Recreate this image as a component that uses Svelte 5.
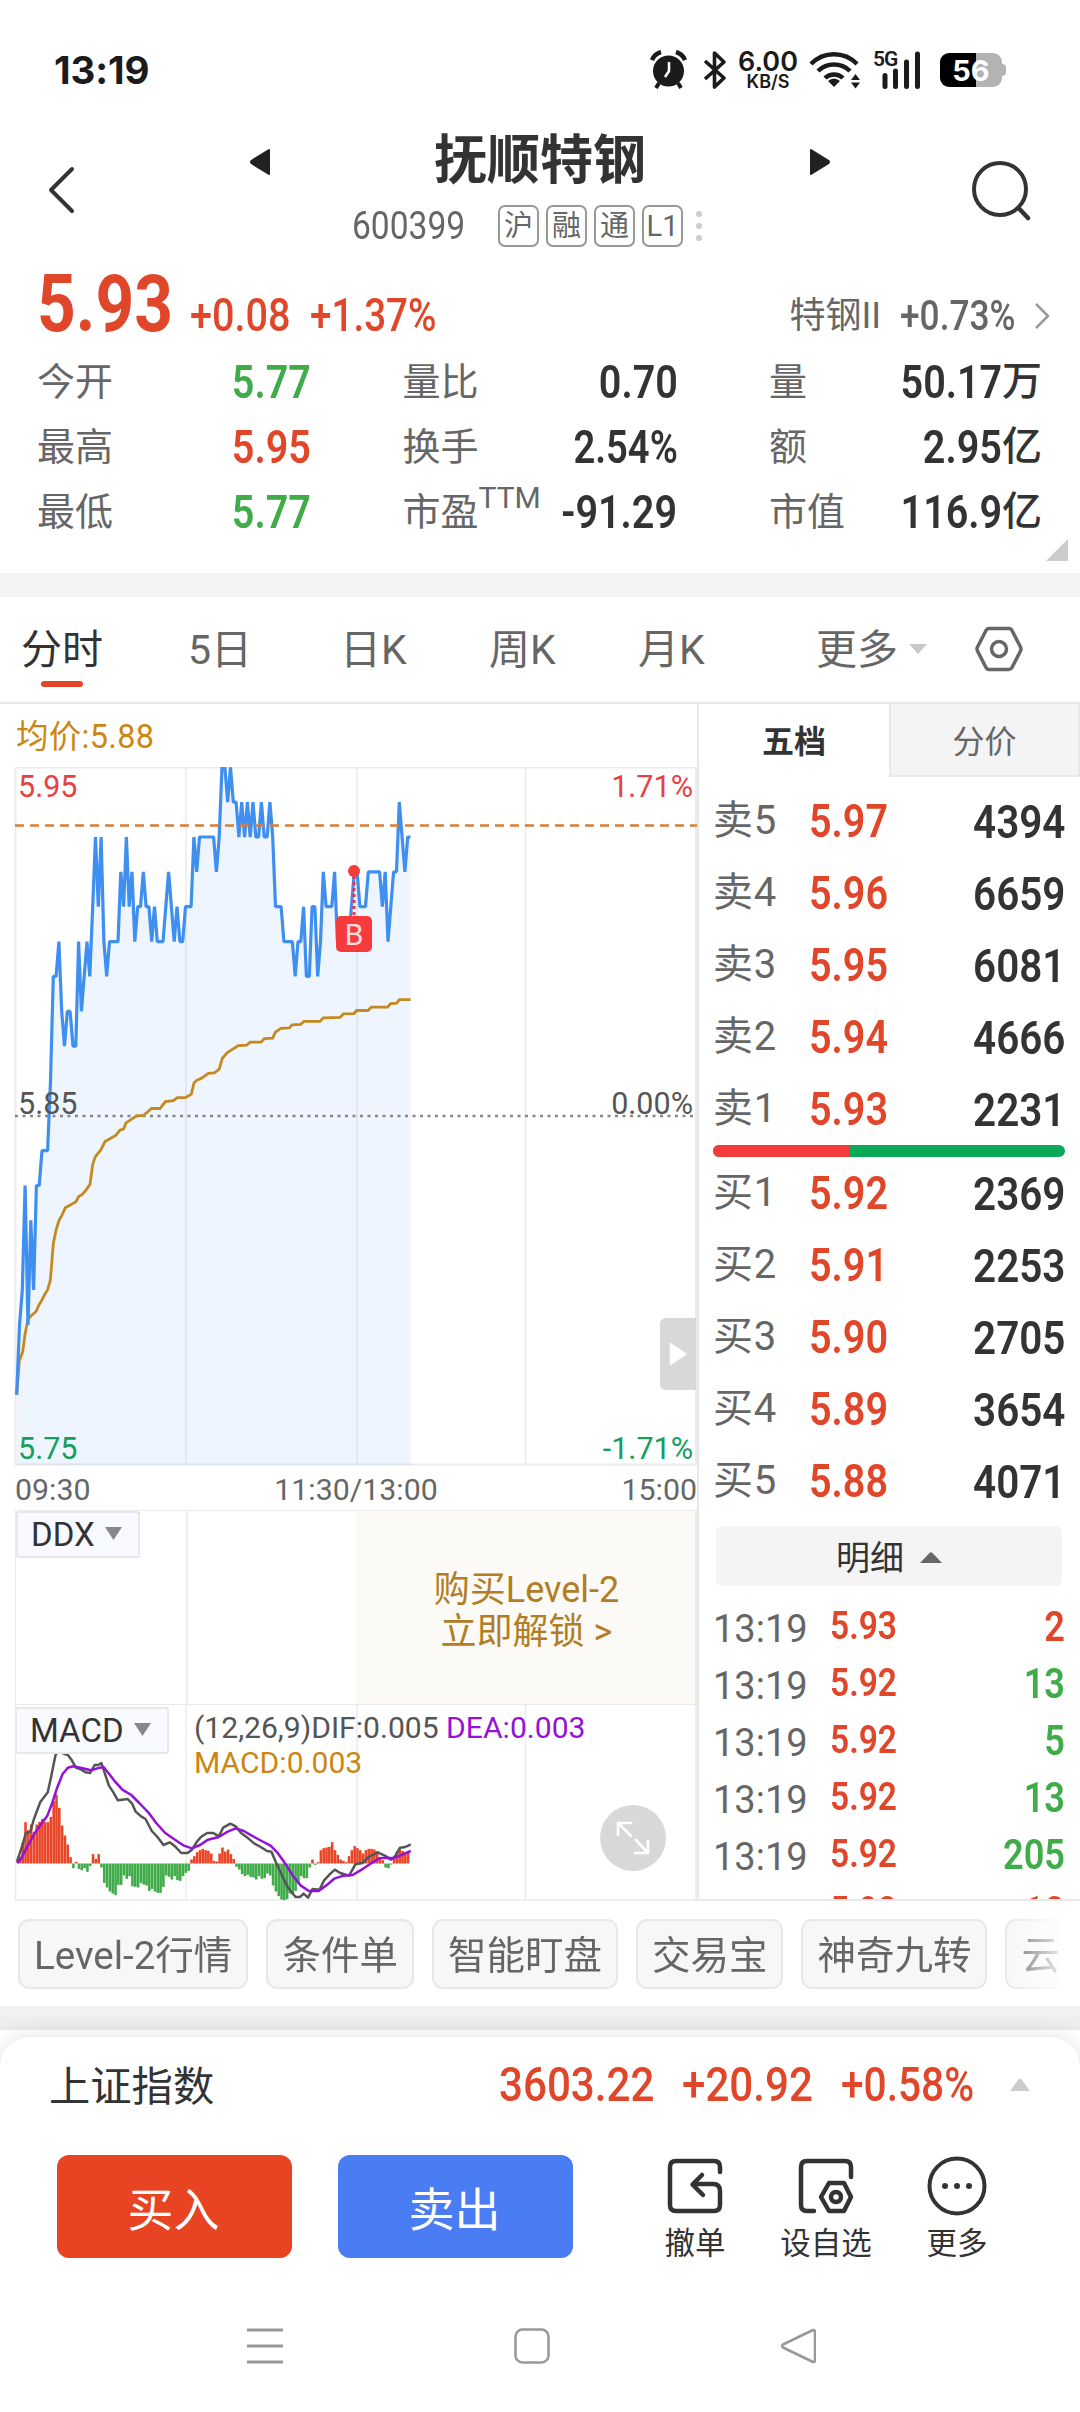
<script lang="ts">
  const tags = ['沪', '融', '通', 'L1']

  const stats = [
    { label: '今开', value: '5.77', tone: 'down' },
    { label: '量比', value: '0.70' },
    { label: '量', value: '50.17', unit: '万' },
    { label: '最高', value: '5.95', tone: 'up' },
    { label: '换手', value: '2.54%' },
    { label: '额', value: '2.95', unit: '亿' },
    { label: '最低', value: '5.77', tone: 'down' },
    { label: '市盈', sup: 'TTM', value: '-91.29' },
    { label: '市值', value: '116.9', unit: '亿' },
  ]

  const periods = ['分时', '5日', '日K', '周K', '月K']

  const asks = [
    ['卖5', '5.97', '4394'],
    ['卖4', '5.96', '6659'],
    ['卖3', '5.95', '6081'],
    ['卖2', '5.94', '4666'],
    ['卖1', '5.93', '2231'],
  ]
  const bids = [
    ['买1', '5.92', '2369'],
    ['买2', '5.91', '2253'],
    ['买3', '5.90', '2705'],
    ['买4', '5.89', '3654'],
    ['买5', '5.88', '4071'],
  ]
  const askShare = 38.7

  const ticks = [
    { price: '5.93', qty: '2', tone: 'up' },
    { price: '5.92', qty: '13', tone: 'down' },
    { price: '5.92', qty: '5', tone: 'down' },
    { price: '5.92', qty: '13', tone: 'down' },
    { price: '5.92', qty: '205', tone: 'down' },
    { price: '5.92', qty: '10', tone: 'up' },
  ]

  const chips = ['Level-2行情', '条件单', '智能盯盘', '交易宝', '神奇九转', '云参数']

  // one entry per minute, in cents away from the previous close (5.85)
  const minutes = [
    -8, -6, -5, -2, -6, -3, -5, -2, -2, -1, -1, -1, 1, 4, 4, 5, 3, 2, 3, 3, 2, 2, 5, 3, 4, 5, 4, 6, 8, 6,
    8, 5, 4, 5, 5, 5, 5, 7, 6, 8, 6, 7, 5, 6, 6, 7, 6, 6, 5, 6, 5, 5, 5, 6, 7, 6, 5, 6, 5, 5,
    6, 6, 6, 8, 7, 8, 8, 8, 8, 8, 8, 7, 8, 10, 10, 9, 10, 9, 9, 8, 9, 8, 9, 8, 9, 8, 8, 9, 8, 8,
    9, 8, 6, 6, 6, 5, 5, 5, 5, 4, 5, 5, 6, 4, 4, 6, 6, 4, 5, 7, 6, 6, 6, 7, 5, 5, 5, 5, 5, 6,
    7, 7, 6, 6, 6, 7, 7, 7, 7, 7, 6, 7, 5, 6, 7, 7, 9, 8, 7, 8, 8,
  ]

  const macdBars = [
    0, 20, 62, 124, 100, 117, 94, 117, 125, 134, 124, 124, 140, 187, 207, 167, 114, 84, 57, 19, -14, 5, -16, -20,
    -14, -25, -8, 28, 14, 28, -12, -58, -72, -84, -90, -95, -64, -64, -36, -46, -38, -68, -70, -72, -58, -63, -66,
    -82, -76, -84, -88, -88, -70, -36, -40, -48, -38, -50, -52, -38, -28, -22, 12, 22, 34, 40, 44, 40, 38, 30, 8,
    6, 30, 48, 36, 42, 28, 14, -10, -18, -32, -38, -34, -40, -42, -48, -38, -46, -44, -30, -36, -66, -84, -98,
    -108, -110, -107, -90, -92, -82, -60, -38, -44, -44, -12, 12, -4, 4, 40, 46, 48, 50, 64, 40, 26, 12, 8, 4, 22,
    40, 52, 46, 40, 30, 40, 44, 44, 42, 36, 16, 10, -12, -14, -3, 14, 36, 44, 38, 34, 32,
  ]

  const STEP = 2.813
  const minuteX = (i: number) => 16.7 + i * STEP
  const priceY = (c: number) => 348.8 - c * 34.85

  const priceLine = minutes.map((c, i) => `${minuteX(i).toFixed(1)},${priceY(c).toFixed(1)}`).join(' ')
  const lastX = minuteX(minutes.length - 1)
  const priceArea = `${minuteX(0)},698 ${priceLine} ${lastX},698`

  const avgLine =
    '50,1489 58,1410 68,1390 75,1350 84,1315 92,1308 108,1297 118,1280 125,1272 134,1258 143,1247 151,1225 160,1140 168,1110 177,1087 186,1075 196,1058 228,1044 236,1032 247,1027 260,1015 270,1004 278,958 286,940 303,924 315,905 347,891 360,879 371,876 378,862 410,846 430,845 455,829 480,829 496,813 520,811 532,804 556,804 574,796 582,770 590,764 605,759 625,748 643,747 658,738 667,713 682,700 715,684 740,683 750,676 783,676 793,668 818,667 826,653 843,644 868,643 876,636 902,635 912,628 960,628 970,620 1020,619 1030,611 1062,610 1070,603 1104,603 1114,595 1163,595 1172,587 1190,586 1198,578 1232,578'
  const difLine =
    '38,1148 50,1100 58,1062 68,1058 76,1020 90,970 107,940 115,890 124,830 132,812 142,824 152,828 160,842 170,866 182,872 192,880 202,882 212,858 220,858 227,852 234,880 244,920 254,940 264,964 274,962 286,960 296,974 304,998 316,1012 326,1020 340,1056 354,1076 366,1098 380,1090 392,1102 406,1122 420,1122 430,1112 440,1090 450,1074 464,1062 478,1062 490,1072 500,1046 516,1034 528,1042 540,1062 556,1078 570,1094 584,1104 598,1116 608,1118 618,1150 632,1190 646,1228 662,1254 672,1254 680,1244 690,1256 700,1230 716,1232 726,1204 740,1184 750,1172 762,1182 782,1190 796,1156 812,1152 826,1134 846,1120 862,1130 876,1142 886,1130 896,1106 908,1104 920,1096'
  const deaLine =
    '38,1152 46,1142 60,1106 76,1066 92,1036 106,1010 116,976 128,926 140,886 152,866 164,862 180,866 204,874 218,868 232,864 244,884 258,908 274,932 294,948 312,972 332,1000 350,1032 370,1062 392,1082 412,1100 430,1108 448,1098 466,1082 490,1074 510,1058 528,1048 546,1056 564,1070 586,1086 606,1100 622,1122 640,1156 658,1194 674,1220 692,1236 714,1236 732,1218 750,1198 770,1190 790,1188 810,1172 830,1154 850,1138 866,1136 880,1138 896,1130 920,1116'
</script>

<div class="screen">
  <div class="status">
    <span class="clock">13:19</span>
    <div class="status-icons">
      <svg width="37" height="40" viewBox="0 0 37 40">
        <circle cx="18.500" cy="21" r="15.500" fill="#1b1b1b" />
        <path d="M2 10A14 14 0 0 1 11 2M26 2A14 14 0 0 1 35 10" fill="none" stroke="#1b1b1b" stroke-width="4.500" />
        <path d="M9 33l-3 5M28 33l3 5" stroke="#1b1b1b" stroke-width="4" />
        <path d="M19 12v9l-4 6" fill="none" stroke="#fff" stroke-width="2.500" />
      </svg>
      <svg class="bt" width="24" height="40" viewBox="0 0 24 40">
        <path d="M2 11l19 17-9.500 9V3L21 12 2 29" fill="none" stroke="#1b1b1b" stroke-width="3.600" stroke-linejoin="round" />
      </svg>
      <div class="speed"><b>6.00</b><i>KB/S</i></div>
      <svg class="wifi" width="52" height="38" viewBox="0 0 52 38">
        <g fill="none" stroke="#1b1b1b" stroke-width="4.500">
          <path d="M2 13a32 32 0 0 1 46 0" />
          <path d="M9 20a23 23 0 0 1 32 0" />
          <path d="M16 27a13 13 0 0 1 18 0" />
        </g>
        <path d="M25 36l-6-6q6-5 12 0z" fill="#1b1b1b" />
        <path d="M42 29l4.500-6 4.500 6zM42 31.500l4.500 6 4.500-6z" fill="#1b1b1b" />
      </svg>
      <div class="signal">
        <b>5G</b>
        <svg width="40" height="38" viewBox="0 0 40 38">
          <path d="M3 24.500v11M13.500 20v15.500M24.500 11v24.500M35.500 3v32.500" stroke="#1b1b1b" stroke-width="5" stroke-linecap="round" />
        </svg>
      </div>
      <div class="battery"><span>56</span></div>
    </div>
  </div>

  <header>
    <svg class="back" width="32" height="50" viewBox="0 0 32 50">
      <path d="M27 4L6 25l21 21" fill="none" stroke="#333" stroke-width="4" stroke-linecap="round" stroke-linejoin="round" />
    </svg>
    <div class="heading">
      <div class="name-row">
        <svg width="22" height="28" viewBox="0 0 22 28"><path d="M20 2v24L3 15.500q-2-1.500 0-3z" fill="#222" stroke="#222" stroke-width="2" stroke-linejoin="round" /></svg>
        <h1>抚顺特钢</h1>
        <svg width="22" height="28" viewBox="0 0 22 28"><path d="M2 2v24l17-10.500q2-1.500 0-3z" fill="#222" stroke="#222" stroke-width="2" stroke-linejoin="round" /></svg>
      </div>
      <div class="code-row">
        <span class="code"><span class="din">600399</span></span>
        {#each tags as tag}
          <span class="tag">{tag}</span>
        {/each}
        <svg class="dots" width="6" height="32" viewBox="0 0 6 32" fill="#ccc"><circle cx="3" cy="4" r="3" /><circle cx="3" cy="16" r="3" /><circle cx="3" cy="28" r="3" /></svg>
      </div>
    </div>
    <svg class="search" width="60" height="60" viewBox="0 0 60 60">
      <circle cx="29" cy="28" r="26" fill="none" stroke="#333" stroke-width="4" />
      <path d="M47.500 47l9.500 10" stroke="#333" stroke-width="4.500" stroke-linecap="round" />
    </svg>
  </header>

  <section class="quote">
    <div class="last up">
      <span class="price"><span class="din">5.93</span></span>
      <span class="change"><span class="din">+0.08</span></span>
      <span class="change pct"><span class="din">+1.37%</span></span>
      <div class="sector">
        特钢II <span class="sector-pct"><span class="din">+0.73%</span></span>
        <svg width="18" height="30" viewBox="0 0 18 30"><path d="M3 3l12 12L3 27" fill="none" stroke="#999" stroke-width="2.500" /></svg>
      </div>
    </div>
    <div class="stats">
      {#each stats as s}
        <div class="stat">
          <span>{s.label}{#if s.sup}<sup>{s.sup}</sup>{/if}</span>
          <b class={s.tone}><span class="din end" class:tight={s.value.endsWith('%')}>{s.value}</span>{#if s.unit}<em>{s.unit}</em>{/if}</b>
        </div>
      {/each}
    </div>
    <svg class="corner" width="22" height="22" viewBox="0 0 22 22"><path d="M22 0v22H0z" fill="#ccc" /></svg>
  </section>

  <div class="band"></div>

  <nav class="periods">
    {#each periods as p, i}
      <span class:active={i === 0}>{p}</span>
    {/each}
    <span class="more">更多<svg width="18" height="10" viewBox="0 0 18 10"><path d="M0 0h18L9 10z" fill="#c8c8c8" /></svg></span>
    <svg class="gear" width="50" height="48" viewBox="0 0 50 48" fill="none" stroke="#666" stroke-width="3.500">
      <path d="M15 3.500h20q2 0 3 2l8.500 16.500q1 2 0 4L38 42.500q-1 2-3 2H15q-2 0-3-2L3.500 26q-1-2 0-4L12 5.500q1-2 3-2z" />
      <circle cx="25" cy="24" r="7.500" />
    </svg>
  </nav>

  <main>
    <div class="charts">
      <div class="avg">均价:5.88</div>
      <div class="pane">
        <svg width="697" height="699" viewBox="0 0 697 699">
          <g stroke="#ebebeb" stroke-width="1.500" fill="none">
            <path d="M15 .8h682M186 0v698M357 0v698M525.500 0v698" />
            <path d="M15.500 0v698M696 0v698M15 697.500h682" stroke-width="2" />
          </g>
          <polygon points={priceArea} fill="#3a8bee" fill-opacity=".085" />
          <path d="M15 349h682" stroke="#888" stroke-width="2.500" stroke-dasharray="3 4.500" />
          <polyline points={avgLine} transform="translate(0 -18) scale(.33333 .43367)" vector-effect="non-scaling-stroke" fill="none" stroke="#c48a20" stroke-width="2.800" />
          <polyline points={priceLine} fill="none" stroke="#3f8ff0" stroke-width="3.200" stroke-linejoin="bevel" />
          <path d="M15 58.500h682" stroke="#d67e36" stroke-width="2.600" stroke-dasharray="9 6" />
          <path d="M354 109v40" stroke="#e8354a" stroke-width="3" stroke-dasharray="3 3" />
          <circle cx="354" cy="104" r="6" fill="#f63b3d" />
          <rect x="336" y="149" width="36" height="36" rx="5" fill="#f63b3d" />
          <text x="354" y="178" text-anchor="middle" font-size="30" fill="#ffdcdc">B</text>
        </svg>
        <span class="axis tl red">5.95</span>
        <span class="axis tr red">1.71%</span>
        <span class="axis ml">5.85</span>
        <span class="axis mr">0.00%</span>
        <span class="axis bl green">5.75</span>
        <span class="axis br green">-1.71%</span>
        <div class="handle"><svg width="18" height="24" viewBox="0 0 18 24"><path d="M1.500 1.500v21L17 12z" fill="#fff" stroke="#fff" stroke-width="1.500" stroke-linejoin="round" /></svg></div>
      </div>
      <div class="times"><span>09:30</span><span>11:30/13:00</span><span>15:00</span></div>
      <div class="pane ddx">
        <div class="selector">DDX <svg width="17" height="13" viewBox="0 0 17 13"><path d="M0 0h17L8.500 13z" fill="#888" /></svg></div>
        <div class="unlock">购买Level-2<br />立即解锁 &gt;</div>
      </div>
      <div class="pane macd">
        <svg width="697" height="196" viewBox="0 0 697 196">
          <g stroke="#ebebeb" stroke-width="1.500"><path d="M15.500 0v196M186 0v196M357 0v196M525.500 0v196M696 0v196M15 195h682" /></g>
          {#each macdBars as v, i}
            <rect x={15.800 + i * STEP} y={v > 0 ? 158.500 - v / 3 : 158.500} width="2.600" height={Math.abs(v) / 3} fill={v > 0 ? '#e84527' : '#3fac49'} />
          {/each}
          <g transform="translate(0 -226) scale(.44643 .33333)" fill="none" stroke-width="2.500" stroke-linejoin="round">
            <polyline points={difLine} vector-effect="non-scaling-stroke" stroke="#555" />
            <polyline points={deaLine} vector-effect="non-scaling-stroke" stroke="#9412d8" />
          </g>
        </svg>
        <div class="selector">MACD <svg width="17" height="13" viewBox="0 0 17 13"><path d="M0 0h17L8.500 13z" fill="#888" /></svg></div>
        <div class="legend">(12,26,9)DIF:0.005 <span class="dea">DEA:0.003</span><br /><span class="val">MACD:0.003</span></div>
        <div class="expand">
          <svg width="34" height="34" viewBox="0 0 34 34" fill="none" stroke="#fff" stroke-width="2.600" stroke-linecap="round">
            <path d="M2 14V2h13M2 2l13 13M32 20v12H19M32 32L20 19" />
          </svg>
        </div>
      </div>
    </div>

    <aside>
      <div class="book-tabs"><b>五档</b><span>分价</span></div>
      <div class="book">
        {#each asks as [label, price, qty]}
          <div class="level"><span>{label}</span><b class="up"><span class="din">{price}</span></b><b class="qty"><span class="din end">{qty}</span></b></div>
        {/each}
        <div class="ratio"><i style="width: {askShare}%"></i></div>
        {#each bids as [label, price, qty]}
          <div class="level"><span>{label}</span><b class="up"><span class="din">{price}</span></b><b class="qty"><span class="din end">{qty}</span></b></div>
        {/each}
      </div>
      <div class="detail">明细 <svg width="22" height="11" viewBox="0 0 22 11"><path d="M0 11h22L12.500 1q-1.500-1.500-3 0z" fill="#666" /></svg></div>
      <div class="ticks">
        {#each ticks as t}
          <div class="tick"><span>13:19</span><b class="up"><span class="din">{t.price}</span></b><b class="qty {t.tone}"><span class="din end">{t.qty}</span></b></div>
        {/each}
      </div>
    </aside>
  </main>

  <div class="chips">
    {#each chips as chip}
      <span>{chip}</span>
    {/each}
  </div>

  <div class="band lower"></div>

  <footer>
    <div class="index">
      <span>上证指数</span>
      <div class="index-values up">
        <span class="din">3603.22</span>
        <span class="din">+20.92</span>
        <span class="din tight">+0.58%</span>
      </div>
      <svg width="22" height="13" viewBox="0 0 22 13"><path d="M1 13h20L12.500 1.500q-1.500-2-3 0z" fill="#ccc" /></svg>
    </div>
    <div class="actions">
      <button class="buy">买入</button>
      <button class="sell">卖出</button>
      <div class="action">
        <svg width="60" height="60" viewBox="0 0 60 60" fill="none" stroke="#333" stroke-width="4.500" stroke-linecap="round" stroke-linejoin="round">
          <path d="M55 16v-5q0-6-6-6H11q-6 0-6 6v38q0 6 6 6h38q6 0 6-6V35q0-7-7-7H29M37 19l-9.500 9.500L38 39" />
        </svg>
        撤单
      </div>
      <div class="action wide">
        <svg width="60" height="60" viewBox="0 0 60 60" fill="none" stroke="#333" stroke-width="4.500" stroke-linecap="round" stroke-linejoin="round">
          <path d="M55 21V11q0-6-6-6H11q-6 0-6 6v38q0 6 6 6h7" />
          <path d="M33 27h15l7 14L48 55H33l-8-14z" />
          <circle cx="40" cy="41" r="5" />
        </svg>
        设自选
      </div>
      <div class="action">
        <svg width="60" height="60" viewBox="0 0 60 60" fill="#333">
          <circle cx="30" cy="30" r="27.500" fill="none" stroke="#333" stroke-width="4" />
          <circle cx="18" cy="30" r="3" /><circle cx="30" cy="30" r="3" /><circle cx="42" cy="30" r="3" />
        </svg>
        更多
      </div>
    </div>
    <div class="sysnav">
      <svg width="36" height="38" viewBox="0 0 36 38"><path d="M0 3h36M0 19h36M0 35h36" stroke="#999" stroke-width="3" /></svg>
      <svg width="36" height="38" viewBox="0 0 36 38"><rect x="1.500" y="2.500" width="33" height="33" rx="7" fill="none" stroke="#999" stroke-width="2.600" /></svg>
      <svg width="36" height="38" viewBox="0 0 36 38"><path d="M33 3q2 0 2 2v28q0 3-3 1.500L3 20.500q-2-1.500 0-3z" fill="none" stroke="#999" stroke-width="2.600" stroke-linejoin="round" /></svg>
    </div>
  </footer>
</div>

<style>
  :global(body) {
    background: #fff;
  }

  .screen {
    width: 1080px;
    height: 2412px;
    overflow: hidden;
    background: #fff;
    color: #333;
    font-family: Roboto, 'Noto Sans CJK SC', sans-serif;
    line-height: 1;
  }

  .screen :global(svg) {
    display: block;
    flex: none;
  }

  h1 {
    margin: 0;
  }

  b {
    font-weight: 600;
  }

  i,
  em {
    font-style: normal;
  }

  .up {
    color: #e0472a;
  }

  .down {
    color: #3fac49;
  }

  /* narrow numerals */
  .din {
    display: inline-block;
    white-space: nowrap;
    transform: scaleX(0.86);
    transform-origin: left center;
  }

  .din.end {
    transform-origin: right center;
  }

  .din.tight {
    transform: scaleX(0.83);
  }

  .status {
    display: flex;
    align-items: center;
    justify-content: space-between;
    box-sizing: border-box;
    height: 120px;
    padding: 20px 73px 0 54px;
    color: #1b1b1b;
  }

  .clock {
    font-family: Inter, sans-serif;
    font-size: 38.5px;
    font-weight: 650;
    letter-spacing: -0.1px;
  }

  .status-icons {
    display: flex;
    align-items: center;
  }

  .bt {
    margin-left: 16px;
  }

  .speed {
    display: flex;
    flex-direction: column;
    align-items: center;
    width: 60px;
    margin-left: 11px;
    font-family: Inter, sans-serif;
  }

  .speed b {
    font-size: 27px;
    line-height: 22px;
  }

  .speed i {
    font-size: 18px;
    font-weight: 600;
    line-height: 17px;
  }

  .wifi {
    margin-left: 11px;
  }

  .signal {
    position: relative;
    margin: 0 18px 0 21px;
  }

  .signal b {
    position: absolute;
    left: -9px;
    top: -2px;
    font-size: 21px;
    letter-spacing: -1px;
  }

  .battery {
    display: flex;
    align-items: center;
    justify-content: center;
    position: relative;
    width: 62px;
    height: 34px;
    margin-right: 5px;
    border-radius: 9px;
    background: linear-gradient(90deg, #000 58%, #b3b3b3 58%);
    color: #fff;
    font: 700 29px Inter, sans-serif;
  }

  .battery::after {
    content: '';
    position: absolute;
    right: -4px;
    top: 11px;
    width: 4px;
    height: 12px;
    border-radius: 0 4px 4px 0;
    background: #b3b3b3;
  }

  header {
    display: flex;
    box-sizing: border-box;
    height: 140px;
    padding: 0 49px 0 45px;
  }

  .back {
    margin-top: 45px;
  }

  .heading {
    flex: 1;
    margin: 0 140px 0 172px;
  }

  .name-row {
    display: flex;
    align-items: center;
    justify-content: space-between;
    height: 82px;
  }

  h1 {
    font-size: 53px;
    font-weight: 700;
  }

  .name-row svg {
    margin-top: 2px;
  }

  .code-row {
    display: flex;
    align-items: center;
    gap: 7px;
    margin: 3px 0 0 103px;
    color: #666;
  }

  .code {
    width: 139px;
    font-size: 39px;
  }

  .tag {
    display: flex;
    align-items: center;
    justify-content: center;
    box-sizing: border-box;
    width: 41px;
    height: 42px;
    border: 2px solid #999;
    border-radius: 7px;
    font-size: 29px;
  }

  .dots {
    margin-left: 6px;
  }

  .search {
    margin-top: 41px;
  }

  .quote {
    position: relative;
    box-sizing: border-box;
    height: 313px;
    padding: 0 37px;
  }

  .last {
    display: flex;
    align-items: baseline;
    height: 85px;
  }

  .price {
    width: 153px;
    font-size: 80px;
    font-weight: 700;
    line-height: 88px;
  }

  .price .din {
    transform: scaleX(0.845);
  }

  .change {
    width: 120px;
    font-size: 46px;
    font-weight: 500;
  }

  .pct .din {
    transform: scaleX(0.84);
  }

  .sector {
    display: flex;
    align-items: center;
    margin-left: auto;
    margin-right: -8px;
    color: #666;
    font-size: 36px;
    transform: translateY(-3px);
  }

  .sector-pct {
    width: 124px;
    margin-left: 19px;
    font-size: 42px;
    font-weight: 500;
  }

  .sector-pct .din {
    transform: scaleX(0.84);
  }

  .sector svg {
    margin-left: 9px;
  }

  .stats {
    display: grid;
    grid-template-columns: 274px 275px 273px;
    grid-auto-rows: 65px;
    column-gap: 91.5px;
    margin-top: 4px;
  }

  .stat {
    display: flex;
    align-items: center;
    justify-content: space-between;
    font-size: 38px;
    color: #666;
    white-space: nowrap;
  }

  .stat sup {
    font-size: 30px;
    line-height: 0;
    vertical-align: 17px;
  }

  .stat b {
    width: 0;
    display: flex;
    align-items: center;
    justify-content: flex-end;
    font-size: 46px;
    color: #333;
  }

  .stat b.up {
    color: #e0472a;
  }

  .stat b.down {
    color: #3fac49;
  }

  .stat em {
    font-size: 40px;
    font-weight: 500;
  }

  .corner {
    position: absolute;
    right: 12px;
    bottom: 12px;
  }

  .band {
    height: 24px;
    background: #f4f4f4;
  }

  .periods {
    display: flex;
    align-items: center;
    box-sizing: border-box;
    height: 107px;
    padding: 2px 0 0 21px;
    border-bottom: 2px solid #e8e8e8;
    color: #666;
    font-size: 41px;
  }

  .periods span {
    position: relative;
    width: 149px;
  }

  .periods span:first-child {
    width: 167px;
  }

  .periods span:nth-child(2) {
    width: 152px;
  }

  .periods span:nth-child(5) {
    width: 178px;
  }

  .periods .active {
    color: #333;
  }

  .active::after {
    content: '';
    position: absolute;
    left: 20px;
    top: 51px;
    width: 42px;
    height: 6px;
    border-radius: 3px;
    background: #e0472a;
  }

  .periods .more {
    display: flex;
    align-items: center;
    gap: 11px;
    width: 158px;
  }

  .more svg,
  .gear {
    margin-top: -4px;
  }

  main {
    display: flex;
    height: 1197px;
  }

  .charts {
    width: 697px;
    border-right: 2px solid #e8e8e8;
  }

  .avg {
    height: 63px;
    padding-left: 16px;
    line-height: 66px;
    font-size: 32.5px;
    letter-spacing: 0.3px;
    color: #cb8712;
  }

  .pane {
    position: relative;
  }

  .axis {
    position: absolute;
    font-size: 30.5px;
    color: #555;
  }

  .tl,
  .ml,
  .bl {
    left: 18px;
  }

  .tr,
  .mr,
  .br {
    right: 4px;
  }

  .tl,
  .tr {
    top: 5px;
  }

  .ml,
  .mr {
    top: 322px;
  }

  .bl,
  .br {
    bottom: 2px;
  }

  .red {
    color: #e64242;
  }

  .green {
    color: #12a05c;
  }

  .handle {
    position: absolute;
    right: 1px;
    top: 551px;
    display: flex;
    align-items: center;
    justify-content: center;
    width: 36px;
    height: 72px;
    border-radius: 6px 0 0 6px;
    background: #d8d8d8;
  }

  .times {
    display: flex;
    justify-content: space-between;
    padding-left: 15px;
    line-height: 48px;
    height: 44px;
    font-size: 30.3px;
    color: #666;
  }

  .ddx {
    display: flex;
    justify-content: flex-end;
    box-sizing: border-box;
    height: 195px;
    margin-left: 15px;
    border: 1.5px solid #ebebeb;
    border-right-width: 2px;
    background: linear-gradient(#ebebeb, #ebebeb) 170px 0 / 1.5px 100% no-repeat;
  }

  .selector {
    position: absolute;
    left: 15px;
    top: 2px;
    display: flex;
    align-items: center;
    gap: 10px;
    box-sizing: border-box;
    height: 47px;
    padding: 0 16px 0 13px;
    border: 2px solid #e8e8e8;
    border-radius: 3px;
    background: #f8faff;
    font-size: 33px;
  }

  .selector svg {
    margin-top: -3px;
  }

  .ddx .selector {
    left: 0;
    top: 0;
  }

  .unlock {
    width: 337px;
    padding: 58px 0 0 2px;
    background: #fbfaf6;
    color: #b27d24;
    font-size: 36px;
    line-height: 42px;
    text-align: center;
  }

  .legend {
    position: absolute;
    left: 194px;
    top: 5px;
    line-height: 35px;
    font-size: 30.1px;
    color: #555;
  }

  .dea {
    color: #9412d8;
  }

  .val {
    color: #cb8712;
  }

  .expand {
    position: absolute;
    left: 600px;
    top: 100px;
    display: flex;
    align-items: center;
    justify-content: center;
    width: 66px;
    height: 66px;
    border-radius: 50%;
    background: #d8d8d8;
  }

  aside {
    flex: 1;
    display: flex;
    flex-direction: column;
    border-bottom: 2px solid #e8e8e8;
  }

  .book-tabs {
    display: flex;
    height: 73px;
    font-size: 32px;
    text-align: center;
    line-height: 77px;
  }

  .book-tabs b {
    width: 190px;
    font-weight: 700;
  }

  .book-tabs span {
    flex: 1;
    box-sizing: border-box;
    border: 2px solid #e8e8e8;
    border-top: 0;
    background: #f4f4f4;
    color: #666;
  }

  .book {
    padding: 8px 15px 0 14px;
  }

  .level {
    display: flex;
    align-items: center;
    height: 72px;
    font-size: 40px;
    color: #666;
  }

  .level > span {
    width: 96px;
    letter-spacing: 0.8px;
  }

  .level b {
    font-size: 46px;
  }

  .level .qty {
    font-size: 47px;
  }

  .qty {
    margin-left: auto;
    color: #333;
  }

  .ratio {
    height: 12px;
    border-radius: 6px;
    overflow: hidden;
    background: #0aa858;
  }

  .ratio i {
    display: block;
    height: 100%;
    background: #f63b3d;
  }

  .detail {
    display: flex;
    align-items: center;
    justify-content: center;
    gap: 16px;
    box-sizing: border-box;
    height: 60px;
    padding-top: 3px;
    margin: 9px 18px 14px 17px;
    border-radius: 6px;
    background: #f4f4f4;
    font-size: 34px;
  }

  .ticks {
    flex: 1;
    min-height: 0;
    overflow: hidden;
    padding: 0 15px 0 14px;
  }

  .tick {
    display: flex;
    align-items: center;
    height: 57px;
    color: #666;
    font-size: 38px;
  }

  .tick > span {
    width: 117px;
  }

  .tick b {
    font-size: 39px;
    padding-bottom: 4px;
  }

  .tick .qty {
    font-size: 42px;
  }

  .qty.up {
    color: #e0472a;
  }

  .qty.down {
    color: #3fac49;
  }

  .chips {
    display: flex;
    gap: 18px;
    box-sizing: border-box;
    width: 1062px;
    height: 105px;
    padding: 18px 0 0 18px;
    overflow: hidden;
    mask-image: linear-gradient(90deg, #000 1000px, transparent 1072px);
  }

  .chips span {
    flex: none;
    box-sizing: border-box;
    height: 70px;
    padding: 2px 14px 0;
    border: 2px solid #e8e8e8;
    border-radius: 11px;
    background: #f7f7f7;
    color: #666;
    font-size: 38.5px;
    line-height: 66px;
  }

  .lower {
    background: linear-gradient(#f3f3f3, #ebebeb);
  }

  footer {
    position: relative;
    height: 375px;
    margin-top: 7px;
    border-radius: 30px 30px 0 0;
    background: #fff;
    box-shadow: 0 0 22px rgba(0, 0, 0, 0.12);
  }

  .index {
    display: flex;
    align-items: center;
    height: 98px;
    padding: 0 49px 0 49px;
    font-size: 41.3px;
  }

  .index > span {
    padding-top: 3px;
  }

  .index-values {
    display: grid;
    grid-template-columns: 183px 159px 168px;
    margin-left: auto;
    padding-bottom: 3px;
    font-size: 49px;
    font-weight: 500;
  }

  .index svg {
    margin-top: -3px;
  }

  .actions {
    display: flex;
    align-items: flex-start;
    padding: 20px 0 0 57px;
  }

  button {
    width: 235px;
    height: 103px;
    margin-right: 46px;
    padding: 0 2px 2px 0;
    border: 0;
    border-radius: 12px;
    color: #fff;
    font-family: inherit;
    font-size: 46px;
  }

  .buy {
    background: #e84323;
  }

  .sell {
    background: #4a7df3;
    margin-right: 60px;
  }

  .action {
    display: flex;
    flex-direction: column;
    align-items: center;
    gap: 13px;
    width: 124px;
    font-size: 30.5px;
    margin-top: 1px;
  }

  .action.wide {
    width: 138px;
  }

  .sysnav {
    display: flex;
    justify-content: space-between;
    padding: 67px 264px 0 247px;
  }
</style>
